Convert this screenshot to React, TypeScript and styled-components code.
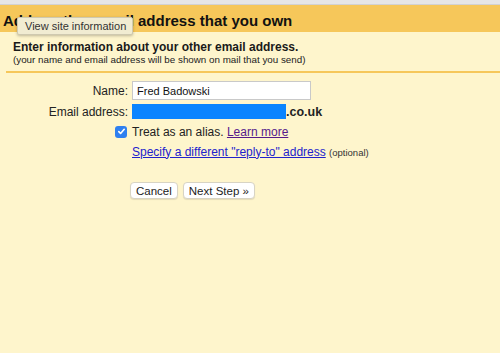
import styled, { createGlobalStyle } from "styled-components";

const GlobalStyle = createGlobalStyle`
  html, body {
    margin: 0;
    padding: 0;
    background: #fef5cc;
    font-family: "Liberation Sans", Arial, sans-serif;
    color: #222;
  }
`;

const Page = styled.div`
  width: 500px;
  height: 353px;
  background: #fef5cc;
  position: relative;
  overflow: hidden;
`;

const TopStrip = styled.div`
  height: 4px;
  background: #e6e6e6;
  border-bottom: 1px solid #d2d2d2;
`;

const Header = styled.h1`
  margin: 0;
  height: 27px;
  background: #f6c75a;
  font-size: 15px;
  font-weight: bold;
  color: #111;
  padding: 7px 0 0 3px;
  box-sizing: border-box;
  white-space: nowrap;
`;

const Tooltip = styled.div`
  position: absolute;
  left: 17px;
  top: 17px;
  padding: 2px 6px 2px 7px;
  background: #f1ecd2;
  border: 1px solid #cfc9b0;
  border-radius: 2px;
  box-shadow: 0 1px 3px rgba(0, 0, 0, 0.25);
  font-size: 11px;
  color: #333;
  white-space: nowrap;
`;

const Intro = styled.div`
  margin: 0 0 0 6px;
  padding: 8px 0 6px 7px;
  border-bottom: 2px solid #f6c75a;
`;

const IntroTitle = styled.div`
  font-size: 12px;
  font-weight: bold;
  color: #1a1a1a;
`;

const IntroNote = styled.div`
  font-size: 9.8px;
  color: #222;
`;

const Form = styled.div`
  display: grid;
  grid-template-columns: 128px 1fr;
  column-gap: 4px;
  row-gap: 3px;
  padding-top: 8px;
  font-size: 12px;
`;

const Label = styled.label`
  text-align: right;
  align-self: center;
  color: #222;
`;

const Field = styled.div`
  display: flex;
  align-items: center;
  gap: 4px;
  min-height: 17px;
`;

const TextInput = styled.input`
  width: 179px;
  height: 19px;
  box-sizing: border-box;
  border: 1px solid #c9c9c9;
  background: #fff;
  font-family: "Liberation Sans", Arial, sans-serif;
  font-size: 11px;
  padding: 0 4px;
  color: #111;
  outline: none;
`;

const Redacted = styled.span`
  display: inline-block;
  width: 154px;
  height: 15px;
  background: #0a84ff;
`;

const Domain = styled.span`
  font-weight: bold;
  font-size: 12.5px;
  margin-left: -4px;
`;

const CheckBox = styled.span`
  width: 12px;
  height: 12px;
  border-radius: 3px;
  background: #2f80f0;
  display: inline-flex;
  align-items: center;
  justify-content: center;
  justify-self: end;
  align-self: center;
  margin-right: 1px;
`;

const Link = styled.a<{ $visited?: boolean }>`
  color: ${(p) => (p.$visited ? "#551a8b" : "#2222cc")};
  text-decoration: underline;
  cursor: pointer;
`;

const Optional = styled.span`
  font-size: 9.5px;
  color: #333;
`;

const Buttons = styled.div`
  display: flex;
  gap: 5px;
  padding: 22px 0 0 130px;
`;

const Button = styled.button`
  font-family: "Liberation Sans", Arial, sans-serif;
  font-size: 11.5px;
  color: #222;
  background: #fff;
  border: 1px solid #d8d4c4;
  border-radius: 4px;
  height: 17px;
  padding: 0 5px;
  box-shadow: 0 1px 1px rgba(0, 0, 0, 0.1);
`;

export default function App() {
  return (
    <Page>
      <GlobalStyle />
      <TopStrip />
      <Header>Add another email address that you own</Header>
      <Tooltip>View site information</Tooltip>
      <Intro>
        <IntroTitle>Enter information about your other email address.</IntroTitle>
        <IntroNote>
          (your name and email address will be shown on mail that you send)
        </IntroNote>
      </Intro>
      <Form>
        <Label>Name:</Label>
        <Field>
          <TextInput defaultValue="Fred Badowski" />
        </Field>
        <Label>Email address:</Label>
        <Field>
          <Redacted />
          <Domain>.co.uk</Domain>
        </Field>
        <CheckBox>
          <svg width="9" height="9" viewBox="0 0 10 10">
            <path d="M2 5.2l2 2 4-4.6" stroke="#fff" strokeWidth="1.8" fill="none" strokeLinecap="round" strokeLinejoin="round" />
          </svg>
        </CheckBox>
        <Field>
          <span>
            Treat as an alias. <Link $visited>Learn more</Link>
          </span>
        </Field>
        <span />
        <Field>
          <span>
            <Link>Specify a different "reply-to" address</Link> <Optional>(optional)</Optional>
          </span>
        </Field>
      </Form>
      <Buttons>
        <Button>Cancel</Button>
        <Button>Next Step »</Button>
      </Buttons>
    </Page>
  );
}
